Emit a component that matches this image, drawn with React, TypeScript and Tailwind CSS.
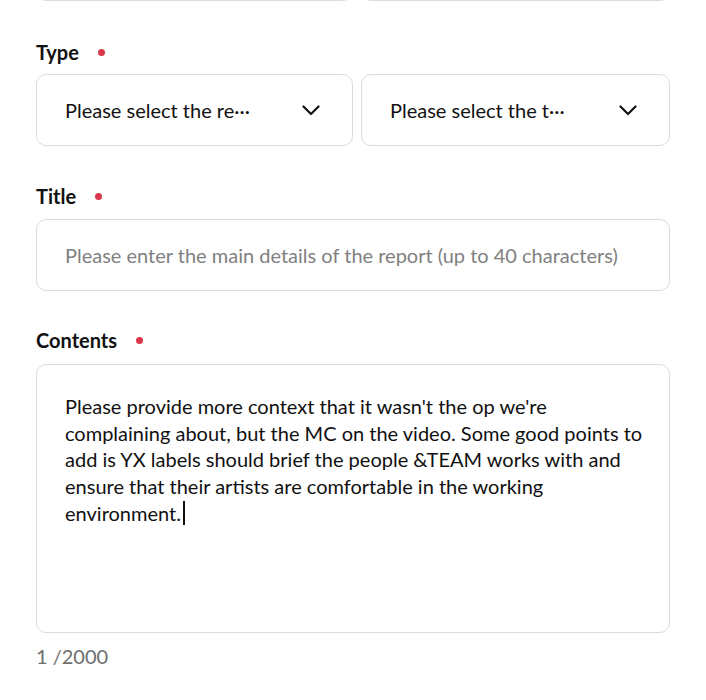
function Chevron() {
  return (
    <svg width="18" height="11" viewBox="0 0 18 11" fill="none" className="shrink-0">
      <path d="M1.5 1.5L9 9L16.5 1.5" stroke="#111" strokeWidth="2.2" strokeLinecap="round" strokeLinejoin="round" />
    </svg>
  );
}

function Label({ text, gap }: { text: string; gap: "a" | "b" | "c" }) {
  const mb = gap === "a" ? "mb-[9px]" : gap === "b" ? "mb-[10px]" : "mb-[11px]";
  return (
    <div className={`flex items-center h-[26px] ${mb}`}>
      <span className="text-[20px] font-bold text-[#111] leading-[26px]">{text}</span>
      <span className="ml-[19px] w-[7px] h-[7px] rounded-full bg-[#d9384a]" />
    </div>
  );
}

function Select({ text }: { text: string }) {
  return (
    <div className="h-[72px] rounded-[10px] border border-[#dcdcdc] bg-white flex items-center justify-between pl-[28px] pr-[32px]">
      <span className="text-[20px] text-[#111] leading-[26px] whitespace-nowrap">{text}</span>
      <Chevron />
    </div>
  );
}

export default function App() {
  const lines = [
    "Please provide more context that it wasn't the op we're",
    "complaining about, but the MC on the video. Some good points to",
    "add is YX labels should brief the people &TEAM works with and",
    "ensure that their artists are comfortable in the working",
  ];
  return (
    <div className="w-[706px] h-[700px] overflow-hidden bg-white px-[36px] font-['Lato',sans-serif]">
      <div className="grid grid-cols-[317px_1fr] gap-2 -mt-[71px] mb-[38px]">
        <div className="h-[72px] rounded-[10px] border border-[#dcdcdc]" />
        <div className="h-[72px] rounded-[10px] border border-[#dcdcdc]" />
      </div>

      <div className="mb-[37px]">
        <Label text="Type" gap="a" />
        <div className="grid grid-cols-[317px_1fr] gap-2">
          <Select text="Please select the re···" />
          <Select text="Please select the t···" />
        </div>
      </div>

      <div className="mb-[36px]">
        <Label text="Title" gap="b" />
        <div className="h-[72px] rounded-[10px] border border-[#dcdcdc] bg-white flex items-center px-[28px]">
          <span className="text-[20px] text-[#808080] leading-[26px] whitespace-nowrap">
            Please enter the main details of the report (up to 40 characters)
          </span>
        </div>
      </div>

      <div>
        <Label text="Contents" gap="c" />
        <div className="h-[269px] rounded-[10px] border border-[#dcdcdc] bg-white px-[28px] pt-[28px]">
          <div className="text-[20px] text-[#111] leading-[26.7px]">
            {lines.map((l) => (
              <div key={l} className="whitespace-nowrap">{l}</div>
            ))}
            <div className="flex items-center whitespace-nowrap">
              <span>environment.</span>
              <span className="ml-[2px] w-[2px] h-[24px] bg-[#111]" />
            </div>
          </div>
        </div>
        <div className="mt-[10px] text-[20px] leading-[26px] text-[#6e6e6e]">1 /2000</div>
      </div>
    </div>
  );
}
